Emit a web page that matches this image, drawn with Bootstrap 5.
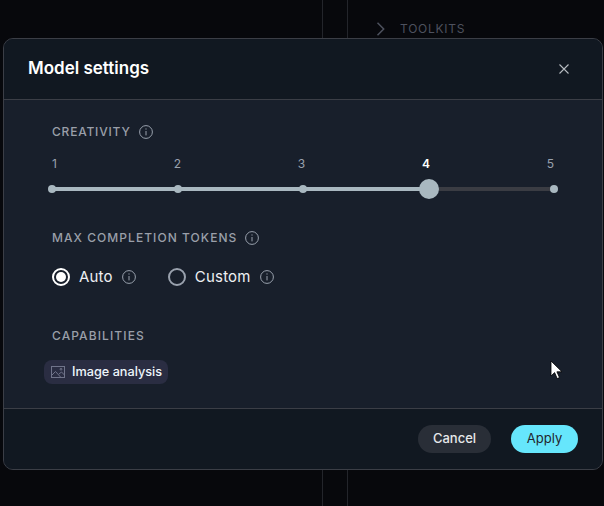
<!DOCTYPE html>
<html lang="en">
<head>
    <meta charset="UTF-8">
    <title>Model settings</title>
    <link href="https://cdn.jsdelivr.net/npm/bootstrap@5.3.0/dist/css/bootstrap.min.css" rel="stylesheet">
    <style>
        html, body { height: 100%; }
        body { background: #07080c; font-family: Inter, "Liberation Sans", sans-serif; overflow: hidden; }
        .page-bg { height: 506px; }
        .bg-left { width: 323px; border-right: 1px solid #23252b; }
        .bg-gap { width: 25px; border-right: 1px solid #23252b; }
        .toolkits { padding: 20px 0 0 28px; height: 38px; color: #4d515e; font-size: 12px; letter-spacing: .75px; gap: 14px; }
        .settings-modal { position: absolute; left: 3px; top: 38px; width: 600px; height: 432px; background: #181f2b; border: 1px solid #3b3e46; border-radius: 10px; overflow: hidden; }
        .settings-modal .modal-header { height: 61px; padding: 0 24px; background: #111821; border-bottom: 1px solid #3b3e46; border-radius: 0; }
        .settings-modal .modal-title { color: #fff; font-size: 17px; font-weight: 600; }
        .close-x { background: none; border: 0; padding: 0; line-height: 0; margin-right: 9px; }
        .settings-modal .modal-body { padding: 24px 44px 0 48px; }
        .section-label { color: #9a9fa9; font-size: 12px; font-weight: 500; letter-spacing: .8px; line-height: 16px; }
        .section-tokens { margin-top: 31px; letter-spacing: 1.05px; }
        .section-cap { margin-top: 41px; letter-spacing: 1.1px; }
        .slider-labels { margin: 16px 0 0; padding: 0 4px 0 0; font-size: 12px; color: #99a1ad; line-height: 16px; }
        .slider-labels .on { color: #fff; font-weight: 600; }
        .slider-wrap { position: relative; height: 20px; margin: 7px 0 0 -4px; }
        .slider-track { position: absolute; left: 4px; right: 4px; top: 8px; height: 4px; background: #3a3c43; }
        .slider-fill { position: absolute; left: 4px; top: 8px; height: 4px; background: #a9b8c0; }
        .slider-stops { position: absolute; inset: 0; }
        .stop { width: 8px; height: 8px; border-radius: 50%; background: #a9b8c0; }
        .stop.thumb { width: 20px; height: 20px; margin: 0 -6px; }
        .radio-row { margin-top: 21px; height: 20px; color: #eef0f3; font-size: 15px; font-weight: 400; letter-spacing: .2px; gap: 32px; }
        .radio-item { gap: 9px; }
        .radio-dot { width: 18px; height: 18px; border-radius: 50%; border: 2px solid #99a1ad; flex: none; }
        .radio-dot.on { border-color: #fff; position: relative; }
        .radio-dot.on::after { content: ""; position: absolute; inset: 2px; border-radius: 50%; background: #fff; }
        .cap-chip { display: inline-flex; align-items: center; gap: 7px; height: 24px; padding: 0 6px 0 7px; margin: 16px 0 0 -8px; background: #2a2d42; border-radius: 8px; color: #eef6fb; font-size: 12.7px; font-weight: 500; }
        .settings-modal .modal-footer { position: absolute; left: 0; right: 0; bottom: 0; height: 61px; padding: 0 24px 0 0; gap: 20px; background: #111821; border-top: 1px solid #3b3e46; border-radius: 0; }
        .settings-modal .modal-footer .btn { margin: 0; height: 28px; padding: 0; font-size: 13px; font-weight: 500; border: 0; border-radius: 14px; }
        .btn-cancel { width: 73px; background: #292e37; color: #e6e8ea; }
        .btn-apply { width: 67px; background: #66e6fc; color: #23262e; font-weight: 400 !important; }
        .cursor-mark { position: absolute; left: 550px; top: 360px; }
    </style>
</head>
<body>

<div class="page-bg d-flex">
    <div class="bg-left"></div>
    <div class="bg-gap"></div>
    <div class="toolkits d-flex align-items-center">
        <svg width="10" height="14" viewBox="0 0 10 14" fill="none" stroke="#4d515e" stroke-width="1.5"><path d="M1.5 .8 7.7 7 1.5 13.2"/></svg>
        <span>TOOLKITS</span>
    </div>
</div>

<div class="settings-modal">
    <div class="modal-header">
        <h5 class="modal-title">Model settings</h5>
        <button class="close-x" type="button" aria-label="Close">
            <svg width="10" height="10" viewBox="0 0 10 10" fill="none" stroke="#b6bac0" stroke-width="1.1"><path d="M.5.5l9 9M9.5.5l-9 9"/></svg>
        </button>
    </div>
    <div class="modal-body">
        <div class="section-label d-flex align-items-center gap-2">
            <span>CREATIVITY</span>
            <svg width="14" height="14" viewBox="0 0 14 14" fill="none" stroke="#99a1ad"><circle cx="7" cy="7" r="6.4"/><path d="M7 6v4.4M7 3.4v1.2"/></svg>
        </div>
        <div class="slider-labels d-flex justify-content-between">
            <span>1</span><span>2</span><span>3</span><span class="on">4</span><span>5</span>
        </div>
        <div class="slider-wrap">
            <div class="slider-track"></div>
            <div class="slider-fill" style="width: 75%"></div>
            <div class="slider-stops d-flex justify-content-between align-items-center">
                <div class="stop"></div><div class="stop"></div><div class="stop"></div><div class="stop thumb"></div><div class="stop"></div>
            </div>
        </div>

        <div class="section-label section-tokens d-flex align-items-center gap-2">
            <span>MAX COMPLETION TOKENS</span>
            <svg width="14" height="14" viewBox="0 0 14 14" fill="none" stroke="#99a1ad"><circle cx="7" cy="7" r="6.4"/><path d="M7 6v4.4M7 3.4v1.2"/></svg>
        </div>
        <div class="radio-row d-flex align-items-center">
            <div class="radio-item d-flex align-items-center">
                <span class="radio-dot on"></span><span>Auto</span>
                <svg width="14" height="14" viewBox="0 0 14 14" fill="none" stroke="#99a1ad"><circle cx="7" cy="7" r="6.4"/><path d="M7 6v4.4M7 3.4v1.2"/></svg>
            </div>
            <div class="radio-item d-flex align-items-center">
                <span class="radio-dot"></span><span>Custom</span>
                <svg width="14" height="14" viewBox="0 0 14 14" fill="none" stroke="#99a1ad"><circle cx="7" cy="7" r="6.4"/><path d="M7 6v4.4M7 3.4v1.2"/></svg>
            </div>
        </div>

        <div class="section-label section-cap">CAPABILITIES</div>
        <div class="cap-chip">
            <svg width="14" height="12" viewBox="0 0 14 12" fill="none" stroke="#70748a"><rect x=".5" y=".5" width="13" height="11"/><path d="M.5 9.5 4.5 5.5 9.5 11M8 8l2.5-2 3 3"/><circle cx="10" cy="3.2" r=".9"/></svg>
            <span>Image analysis</span>
        </div>
    </div>
    <div class="modal-footer">
        <button class="btn btn-cancel" type="button">Cancel</button>
        <button class="btn btn-apply" type="button">Apply</button>
    </div>
</div>

<svg class="cursor-mark" width="13" height="20" viewBox="0 0 13 20"><path d="M1 1v15l3.6-3.4 2.6 6 2.3-1-2.6-5.8H12z" fill="#fff" stroke="#000" stroke-width=".8"/></svg>

</body>
</html>
